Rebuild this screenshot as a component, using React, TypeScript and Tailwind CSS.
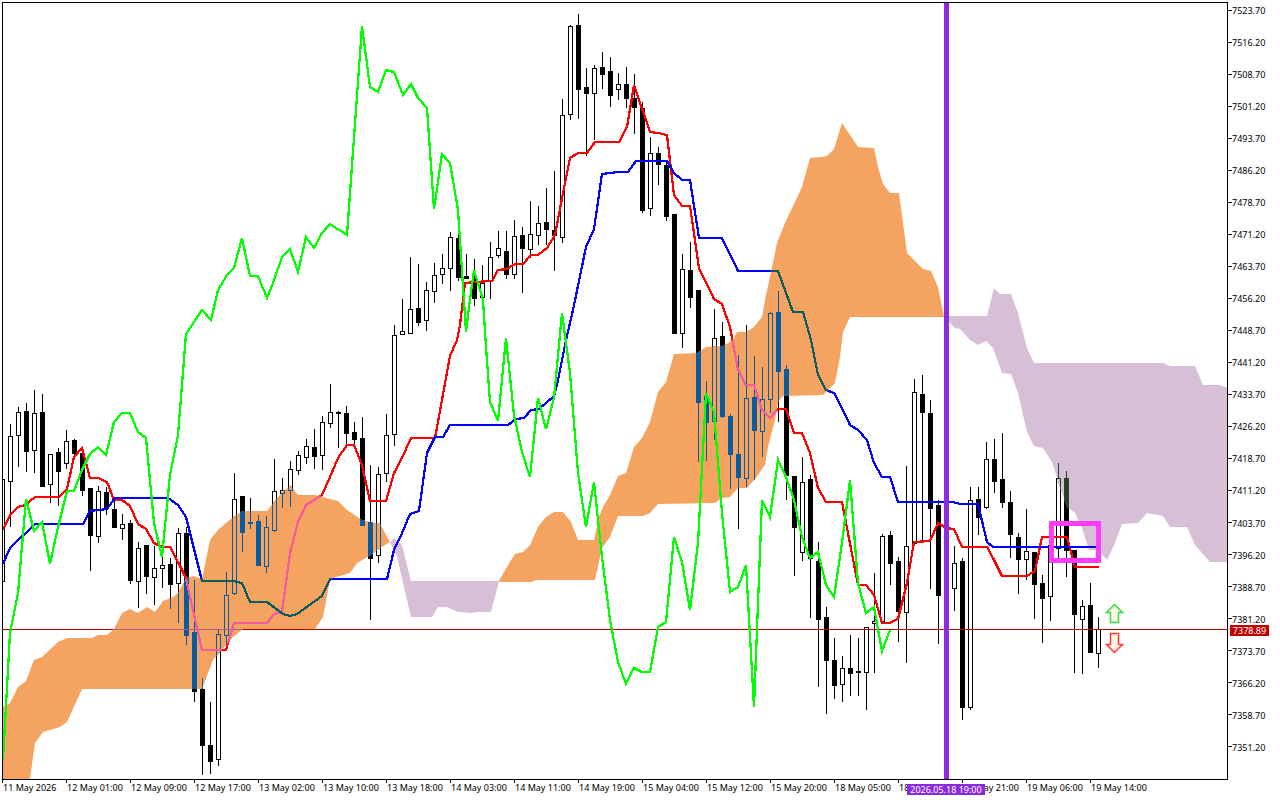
const FONT = "font-['Noto_Sans',Arial,sans-serif]";

// [wick top, body top, body bottom, wick bottom, hollow]; candles sit 8px apart from x=2
const candles: [number, number, number, number, number][] = [
  [475, 479, 581, 590, 1], [424, 436, 481, 526, 1], [407, 412, 435, 466, 1], [403, 411, 451, 471, 0],
  [390, 413, 450, 472, 1], [394, 412, 486, 486, 0], [454, 454, 484, 502, 1], [448, 452, 471, 505, 0],
  [430, 441, 463, 468, 1], [439, 440, 453, 457, 0], [448, 453, 490, 495, 0], [488, 488, 535, 570, 0],
  [486, 491, 536, 542, 1], [487, 492, 508, 514, 0], [500, 509, 527, 527, 0], [514, 524, 528, 539, 1],
  [520, 523, 580, 583, 0], [542, 548, 581, 607, 1], [545, 545, 576, 593, 0], [546, 568, 577, 604, 1],
  [547, 565, 568, 587, 1], [558, 564, 584, 608, 0], [528, 533, 583, 622, 1], [527, 533, 635, 644, 0],
  [580, 632, 691, 701, 0], [678, 689, 745, 774, 0], [702, 745, 761, 773, 0], [629, 634, 759, 765, 1],
  [572, 595, 635, 650, 1], [473, 499, 593, 594, 1], [496, 496, 532, 551, 0], [498, 522, 523, 528, 0],
  [515, 521, 565, 565, 0], [516, 527, 566, 572, 1], [459, 491, 530, 531, 1], [478, 490, 493, 507, 1],
  [461, 469, 490, 506, 1], [451, 455, 470, 474, 1], [439, 446, 457, 463, 1], [429, 447, 456, 468, 0],
  [416, 422, 455, 469, 1], [384, 412, 423, 427, 1], [411, 412, 413, 447, 0], [406, 413, 433, 445, 0],
  [422, 432, 439, 446, 0], [417, 438, 525, 525, 0], [465, 522, 558, 619, 0], [467, 474, 555, 562, 1],
  [414, 435, 473, 481, 1], [325, 335, 434, 445, 1], [299, 331, 334, 334, 1], [257, 309, 333, 333, 1],
  [264, 308, 322, 325, 0], [282, 290, 320, 330, 1], [263, 275, 291, 302, 1], [254, 268, 274, 283, 1],
  [232, 237, 268, 290, 1], [228, 238, 277, 280, 0], [254, 276, 278, 278, 0], [259, 277, 298, 305, 0],
  [265, 283, 297, 298, 1], [242, 257, 281, 298, 1], [231, 248, 255, 257, 1], [231, 251, 274, 278, 0],
  [220, 236, 274, 278, 1], [227, 235, 248, 292, 0], [201, 234, 249, 257, 1], [206, 223, 235, 244, 1],
  [188, 222, 229, 244, 0], [171, 230, 235, 270, 0], [99, 115, 237, 242, 1], [25, 26, 114, 119, 1],
  [14, 25, 89, 118, 0], [68, 87, 93, 155, 0], [65, 68, 93, 139, 1], [52, 67, 74, 88, 0],
  [57, 71, 95, 106, 0], [73, 84, 89, 99, 1], [67, 84, 98, 107, 0], [74, 98, 107, 133, 0],
  [102, 108, 210, 212, 0], [137, 153, 208, 215, 1], [147, 153, 164, 184, 0], [161, 165, 216, 220, 0],
  [214, 214, 333, 333, 0], [254, 269, 333, 347, 1], [242, 270, 297, 307, 0], [290, 290, 402, 461, 0],
  [381, 396, 422, 460, 0], [309, 338, 421, 439, 1], [322, 336, 416, 417, 0], [414, 416, 454, 488, 0],
  [355, 454, 477, 528, 0], [325, 398, 478, 486, 1], [356, 397, 430, 479, 0], [367, 399, 431, 456, 1],
  [312, 313, 399, 412, 1], [291, 312, 371, 421, 0], [365, 369, 475, 499, 0], [476, 476, 527, 575, 0],
  [457, 482, 552, 560, 1], [475, 479, 558, 617, 0], [542, 561, 619, 686, 0], [607, 617, 660, 713, 0],
  [638, 660, 685, 698, 0], [656, 668, 684, 701, 1], [635, 668, 673, 695, 0], [638, 671, 672, 695, 0],
  [627, 627, 672, 709, 1], [573, 621, 623, 672, 1], [534, 536, 621, 621, 1], [531, 535, 563, 584, 0],
  [557, 561, 611, 641, 0], [466, 546, 612, 662, 1], [379, 392, 543, 543, 1], [375, 394, 412, 541, 0],
  [400, 413, 508, 588, 0], [500, 505, 595, 643, 0], [520, 540, 570, 610, 0], [546, 563, 588, 610, 1],
  [558, 561, 707, 719, 0], [487, 500, 707, 709, 1], [487, 499, 517, 534, 0], [442, 459, 507, 508, 1],
  [439, 459, 481, 492, 0], [433, 479, 502, 507, 0], [491, 502, 534, 557, 0], [533, 537, 559, 593, 0],
  [509, 551, 559, 579, 1], [552, 552, 584, 618, 0], [575, 583, 598, 642, 0], [525, 545, 596, 620, 1],
  [463, 478, 548, 560, 1], [471, 478, 550, 576, 0], [550, 550, 614, 672, 0], [600, 606, 619, 673, 1],
  [583, 605, 652, 652, 0], [617, 629, 653, 667, 1],
];

const redLine =
  "3,530 10,515 18,507 25,505 35,497 59,497 67,489 74,457 82,448 90,478 98,478 107,482 114,500 122,500 130,506 138,524 146,529 154,543 162,547 170,547 178,562 186,578 194,615 202,650 226,650 234,623 267,623 274,614 282,612 290,553 298,522 306,505 322,495 330,477 338,458 347,445 354,445 362,465 370,501 386,501 394,473 402,458 411,438 435,438 450,356 457,340 460,325 465,283 475,282 492,281 498,270 507,269 515,264 523,264 531,255 538,255 547,248 555,235 563,193 570,158 578,153 587,153 595,142 619,142 627,127 634,85 650,132 658,133 667,135 674,195 682,206 690,206 699,268 714,299 722,304 730,327 738,370 746,385 754,385 762,410 770,418 778,409 786,409 794,433 802,433 810,453 818,488 826,502 842,502 858,585 866,585 874,595 882,623 890,623 898,619 907,583 914,542 930,541 938,523 946,528 954,529 962,547 987,547 993,558 1002,576 1027,576 1035,571 1042,537 1067,537 1075,567 1099,567";

const blueLine =
  "3,564 10,548 35,524 83,524 90,511 107,509 115,498 168,498 178,505 186,517 202,581 233,581 242,583 250,602 267,602 283,614 290,616 297,614 322,596 330,579 387,579 394,550 402,533 410,514 419,511 427,453 435,437 443,437 450,425 508,425 516,419 524,418 531,410 539,409 554,396 558,380 566,340 573,310 586,247 594,229 602,174 618,172 628,172 636,161 667,161 674,173 682,180 690,180 699,238 722,238 738,271 778,271 793,312 803,312 811,340 818,375 826,390 834,393 842,408 850,425 858,430 867,440 874,463 882,477 890,477 898,502 953,502 960,504 978,504 987,542 993,547 1096,547";

const greenLine =
  "3,760 10,633 18,593 26,499 34,531 42,522 50,564 58,527 67,491 74,491 82,470 90,454 98,447 106,455 114,422 122,413 130,413 138,432 146,438 154,523 162,557 170,475 178,435 186,334 194,322 202,310 211,320 218,290 227,275 234,268 242,238 250,276 258,276 267,298 273,283 282,257 290,249 298,272 306,237 314,248 322,233 330,224 347,235 362,26 370,87 378,92 386,70 394,72 403,95 411,84 418,98 427,108 434,209 442,154 450,163 458,210 466,332 469,307 474,270 483,300 486,347 490,402 498,421 506,338 514,415 522,452 530,477 538,398 546,429 554,398 562,313 570,373 578,473 586,527 594,482 602,557 610,620 618,662 626,684 634,668 642,672 650,672 658,627 666,622 674,537 682,562 690,610 698,543 706,393 714,412 722,513 730,592 738,587 746,565 754,707 762,500 770,517 778,460 786,477 794,500 802,537 810,558 818,552 826,585 834,597 842,543 850,480 858,583 866,613 874,607 882,651 890,630";

const orangeA =
  "3,707 10,703 18,687 26,681 34,660 42,657 58,642 67,638 92,638 98,635 107,635 114,629 122,613 130,609 138,613 147,607 155,612 163,601 173,597 178,593 186,578 194,576 202,579 210,540 218,530 227,522 242,511 267,511 283,491 291,486 298,495 315,495 330,499 338,501 347,510 362,520 380,524 390,542 380,548 371,555 357,563 350,573 333,578 330,580 323,617 315,629 243,629 233,637 213,660 202,689 82,689 67,722 60,727 43,732 35,743 30,779 3,779";

const orangeB =
  "499,581 508,565 515,554 523,552 530,545 538,527 546,517 554,512 563,512 571,522 578,540 594,540 599,517 603,507 610,495 618,476 626,473 634,447 642,438 650,422 658,392 666,382 674,354 697,353 706,347 723,346 733,340 737,332 746,332 754,327 762,317 765,300 772,267 777,243 785,223 802,187 810,158 822,157 827,156 834,149 842,123 850,135 858,147 874,148 878,167 883,184 890,193 899,193 907,253 923,269 931,271 938,287 944,317 850,317 843,332 840,357 835,383 823,395 783,396 778,402 775,420 768,447 765,465 755,479 747,488 738,488 730,497 722,498 715,503 658,504 650,513 643,516 618,516 610,537 602,548 595,580 536,580 531,582 499,582";

const thistleA =
  "390,542 394,538 402,545 411,581 499,581 491,612 478,612 470,613 458,612 447,607 438,607 432,617 411,617 397,557";

const thistleB =
  "944,316 987,316 994,288 1000,294 1011,294 1018,313 1027,348 1034,363 1163,363 1170,366 1195,366 1203,385 1220,385 1228,388 1228,562 1210,562 1195,545 1187,527 1170,527 1163,516 1147,513 1138,523 1122,524 1115,543 1107,560 1098,550 1089,550 1082,528 1075,513 1067,507 1060,487 1052,462 1043,448 1034,446 1027,432 1018,393 1011,374 1002,373 993,348 986,341 978,345 970,340 960,329 955,328 950,323 944,317";

const priceLabels = [
  "7523.70", "7516.20", "7508.70", "7501.20", "7493.70", "7486.20", "7478.70", "7471.20",
  "7463.70", "7456.20", "7448.70", "7441.20", "7433.70", "7426.20", "7418.70", "7411.20",
  "7403.70", "7396.20", "7388.70", "7381.20", "7373.70", "7366.20", "7358.70", "7351.20",
];

const timeLabels = [
  "11 May 2026", "12 May 01:00", "12 May 09:00", "12 May 17:00", "13 May 02:00", "13 May 10:00",
  "13 May 18:00", "14 May 03:00", "14 May 11:00", "14 May 19:00", "15 May 04:00", "15 May 12:00",
  "15 May 20:00", "18 May 05:00", "18 May 13:00", "18 May 21:00", "19 May 06:00", "19 May 14:00",
];

interface Palette {
  bg: string;
  dark: string;
  fill: string;
  red: string;
  blue: string;
  price: string;
}

// the terminal XORs its cloud over the chart, so everything under a cloud changes colour
const plain: Palette = { bg: "#ffffff", dark: "#000000", fill: "#ffffff", red: "#ff0000", blue: "#0000ff", price: "#c00000" };
const overOrange: Palette = { bg: "#f4a460", dark: "#0b5b9f", fill: "#f4a460", red: "#f45b9f", blue: "#0b5b60", price: "#a85f90" };
const overThistle: Palette = { bg: "#d8bfd8", dark: "#274027", fill: "#d8bfd8", red: "#ff0000", blue: "#0000ff", price: "#c00000" };

function Layer({ p }: { p: Palette }) {
  return (
    <g shapeRendering="crispEdges">
      <rect x="0" y="0" width="1280" height="800" fill={p.bg} />
      {candles.map(([hi, top, bot, lo, hollow], i) => {
        const x = 2 + i * 8;
        return (
          <g key={i}>
            <rect x={x} y={hi} width="1" height={lo - hi + 1} fill={p.dark} />
            <rect x={x - 2} y={top} width="5" height={bot - top + 1} fill={p.dark} />
            {hollow === 1 && bot - top > 1 && (
              <rect x={x - 1} y={top + 1} width="3" height={bot - top - 1} fill={p.fill} />
            )}
          </g>
        );
      })}
      <rect x="0" y="629" width="1280" height="1" fill={p.price} />
      <polyline points={redLine} fill="none" stroke={p.red} strokeWidth="2.25" />
      <polyline points={blueLine} fill="none" stroke={p.blue} strokeWidth="2.25" />
    </g>
  );
}

function Chart() {
  return (
    <svg viewBox="3 3 1224 776" className="block h-[776px] w-[1224px]">
      <defs>
        <clipPath id="orange">
          <polygon points={orangeA} />
          <polygon points={orangeB} />
        </clipPath>
        <clipPath id="thistle">
          <polygon points={thistleA} />
          <polygon points={thistleB} />
        </clipPath>
      </defs>
      <Layer p={plain} />
      <g clipPath="url(#orange)">
        <Layer p={overOrange} />
      </g>
      <g clipPath="url(#thistle)">
        <Layer p={overThistle} />
      </g>
      <g shapeRendering="crispEdges">
        <polyline points={greenLine} fill="none" stroke="#00ff00" strokeWidth="2.25" />
        <rect x="944" y="0" width="5" height="800" fill="#8a2be2" />
        <rect x="1051.5" y="523.5" width="47" height="37" fill="none" stroke="#ff3cff" strokeWidth="5" />
      </g>
      <polygon
        points="1114.5,604.5 1122.5,612.5 1118.5,612.5 1118.5,622.5 1110.5,622.5 1110.5,612.5 1106.5,612.5"
        fill="#fff8e8"
        stroke="#3fd93f"
        strokeWidth="1.5"
      />
      <polygon
        points="1110.5,633.5 1118.5,633.5 1118.5,644.5 1122.5,644.5 1114.5,652.5 1106.5,644.5 1110.5,644.5"
        fill="#fff8e8"
        stroke="#ff3b30"
        strokeWidth="1.5"
      />
    </svg>
  );
}

export default function App() {
  return (
    <div className={`relative flex h-[800px] w-[1280px] flex-col overflow-hidden bg-white text-[9px] text-black ${FONT}`}>
      <div className="flex">
        <div className="ml-[2px] mt-[2px] border border-black">
          <Chart />
        </div>
        <div className="flex flex-col gap-[20.04px] pt-[4px]">
          {priceLabels.map((label) => (
            <div key={label} className="flex h-[12px] items-center">
              <span className="h-px w-[4px] bg-black" />
              <span className="pt-[2px] leading-[12px]">{label}</span>
            </div>
          ))}
        </div>
      </div>
      <div className="flex pl-[2px]">
        {timeLabels.map((label) => (
          <div key={label} className="w-[64px] shrink-0">
            <div className="h-[3px] w-px bg-black" />
            <div className="whitespace-nowrap pl-px leading-[10px]">{label}</div>
          </div>
        ))}
      </div>
      <div className="absolute left-[1230px] top-[625px] flex h-[11px] w-[39px] items-center justify-center bg-[#c00000] text-white">
        7378.89
      </div>
      <div className="absolute left-[907px] top-[784px] flex h-[11px] w-[78px] items-center justify-center bg-[#8a2be2] text-white">
        2026.05.18 19:00
      </div>
    </div>
  );
}
